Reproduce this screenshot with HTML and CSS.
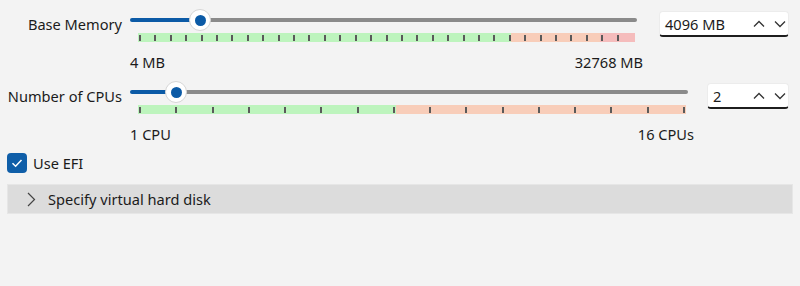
FILE: index.html
```html
<!DOCTYPE html>
<html lang="en">
<head>
    <meta charset="UTF-8">
    <meta name="viewport" content="width=device-width, initial-scale=1.0">
    <title>Virtual Machine Settings</title>
    <link rel="stylesheet" href="styles.css">
</head>
<body>
    <div class="page">
        <div class="setting">
            <div class="setting-label">Base Memory</div>
            <div class="slider slider-memory">
                <div class="track">
                    <div class="track-fill" style="width: 60px"></div>
                    <div class="thumb"></div>
                    <div class="track-rest"></div>
                </div>
                <div class="scale scale-memory">
                    <div class="ticks ticks-memory">
                        <span></span><span></span><span></span><span></span><span></span><span></span><span></span><span></span>
                        <span></span><span></span><span></span><span></span><span></span><span></span><span></span><span></span>
                        <span></span><span></span><span></span><span></span><span></span><span></span><span></span><span></span>
                        <span></span><span></span><span></span><span></span><span></span><span></span><span></span><span></span>
                    </div>
                </div>
                <div class="scale-labels">
                    <span>4 MB</span>
                    <span>32768 MB</span>
                </div>
            </div>
            <div class="spinner spinner-memory">
                <span class="spinner-value">4096 MB</span>
                <span class="spinner-buttons">
                    <svg width="12" height="8" viewBox="0 0 12 8"><path d="M1 6.5 L6 1.5 L11 6.5" fill="none" stroke="#333" stroke-width="1.3"/></svg>
                    <svg width="12" height="8" viewBox="0 0 12 8"><path d="M1 1.5 L6 6.5 L11 1.5" fill="none" stroke="#333" stroke-width="1.3"/></svg>
                </span>
            </div>
        </div>

        <div class="setting">
            <div class="setting-label">Number of CPUs</div>
            <div class="slider slider-cpu">
                <div class="track">
                    <div class="track-fill" style="width: 36px"></div>
                    <div class="thumb"></div>
                    <div class="track-rest"></div>
                </div>
                <div class="scale scale-cpu">
                    <div class="ticks ticks-cpu">
                        <span></span><span></span><span></span><span></span><span></span><span></span><span></span><span></span>
                        <span></span><span></span><span></span><span></span><span></span><span></span><span></span><span></span>
                    </div>
                </div>
                <div class="scale-labels">
                    <span>1 CPU</span>
                    <span>16 CPUs</span>
                </div>
            </div>
            <div class="spinner spinner-cpu">
                <span class="spinner-value">2</span>
                <span class="spinner-buttons">
                    <svg width="12" height="8" viewBox="0 0 12 8"><path d="M1 6.5 L6 1.5 L11 6.5" fill="none" stroke="#333" stroke-width="1.3"/></svg>
                    <svg width="12" height="8" viewBox="0 0 12 8"><path d="M1 1.5 L6 6.5 L11 1.5" fill="none" stroke="#333" stroke-width="1.3"/></svg>
                </span>
            </div>
        </div>

        <label class="checkbox-row">
            <span class="checkbox">
                <svg width="14" height="14" viewBox="0 0 14 14"><path d="M2.5 7.2 L5.6 10.2 L11.5 4" fill="none" stroke="#fff" stroke-width="1.5"/></svg>
            </span>
            <span>Use EFI</span>
        </label>

        <div class="expander">
            <svg class="chevron" width="9" height="15" viewBox="0 0 9 15"><path d="M1 1 L7.5 7.5 L1 14" fill="none" stroke="#444" stroke-width="1.2"/></svg>
            <span>Specify virtual hard disk</span>
        </div>
    </div>
</body>
</html>
```

FILE: styles.css
```css
body {
    font-family: 'Noto Sans', 'Segoe UI', Arial, sans-serif;
    font-size: 14.6px;
    margin: 0;
    background-color: #f3f3f3;
    color: #1b1b1b;
}
.page {
    padding: 9px 7px 0 7px;
}
.setting {
    display: flex;
    align-items: flex-start;
    margin-bottom: 9px;
}
.setting-label {
    width: 115px;
    text-align: right;
    line-height: 22px;
    padding-top: 4px;
    white-space: nowrap;
}
.slider {
    margin-left: 8px;
}
.slider-memory {
    width: 507px;
}
.slider-cpu {
    width: 558px;
}
.track {
    display: flex;
    align-items: center;
    height: 22px;
}
.track-fill {
    height: 4px;
    background-color: #0b5aa6;
    border-radius: 2px 0 0 2px;
}
.thumb {
    width: 20px;
    height: 20px;
    margin: 0 -1px;
    border: 1px solid #d6d6d6;
    border-radius: 50%;
    background-color: #fff;
    display: flex;
    align-items: center;
    justify-content: center;
    position: relative;
    z-index: 1;
}
.thumb::after {
    content: '';
    width: 11px;
    height: 11px;
    border-radius: 50%;
    background-color: #0b5aa6;
}
.track-rest {
    flex: 1;
    height: 4px;
    background-color: #8a8a8a;
    border-radius: 0 2px 2px 0;
}
.scale {
    margin: 2px 2px 0 8px;
    height: 9px;
}
.scale-memory {
    background: linear-gradient(to right, #bdf4bd 0 75%, #f8cdb9 75% 93%, #f5bcbc 93% 100%);
}
.scale-cpu {
    background: linear-gradient(to right, #bdf4bd 0 47%, #f8cdb9 47% 100%);
}
.ticks {
    display: flex;
    justify-content: space-between;
    align-items: center;
    height: 100%;
}
.ticks span {
    width: 2px;
    height: 6px;
    background-color: #5a5a5a;
}
.ticks-memory {
    padding: 0 16px 0 1px;
}
.ticks-cpu {
    padding: 0 1px;
}
.scale-labels {
    display: flex;
    justify-content: space-between;
    margin: 10px -6px 0 0;
    line-height: 20px;
}
.spinner {
    margin-top: 2px;
    height: 23px;
    display: flex;
    align-items: center;
    justify-content: space-between;
    background-color: #fff;
    border: 1px solid #ececec;
    border-bottom: 2px solid #1d1d1d;
    border-radius: 4px;
    padding: 0 2px 0 5px;
}
.spinner-memory {
    margin-left: 22px;
    width: 121px;
}
.spinner-cpu {
    margin-left: 19px;
    width: 73px;
}
.spinner-buttons {
    display: flex;
    gap: 9px;
}
.checkbox-row {
    display: flex;
    align-items: center;
    gap: 6px;
    line-height: 20px;
}
.checkbox {
    width: 20px;
    height: 20px;
    border-radius: 4px;
    background-color: #0f5ea8;
    display: flex;
    align-items: center;
    justify-content: center;
}
.expander {
    margin-top: 11px;
    height: 28px;
    display: flex;
    align-items: center;
    background-color: #dcdcdc;
    border: 1px solid #e6e6e6;
    padding-left: 19px;
}
.chevron {
    margin-right: 12px;
}
```
